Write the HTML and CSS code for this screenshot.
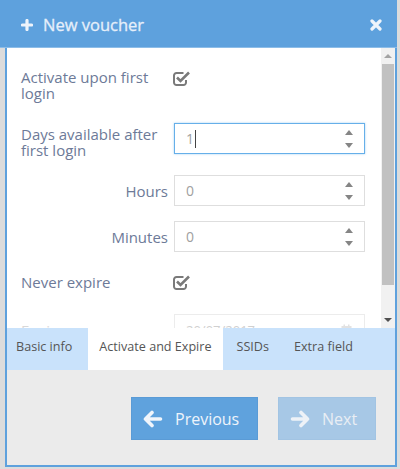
FILE: index.html
```html
<!DOCTYPE html>
<html>
<head>
<meta charset="utf-8">
<link rel="stylesheet" href="styles.css">
</head>
<body>
<div class="page">
  <div class="modal-header">
    <svg class="hdr-plus" width="12" height="12" viewBox="0 0 12 12"><path d="M6 1.5V10.5M1.5 6H10.5" stroke="#eef4fb" stroke-width="3.2" stroke-linecap="round"/></svg>
    <span class="title">New voucher</span>
    <svg class="hdr-close" width="12" height="12" viewBox="0 0 12 12"><path d="M2 2L10 10M10 2L2 10" stroke="#eef4fb" stroke-width="3.2" stroke-linecap="round"/></svg>
  </div>
  <div class="modal-frame">
    <div class="modal-body">
      <div class="form-scroll">
        <div class="row r1">
          <div class="label">Activate upon first login</div>
          <svg class="check" width="18" height="16" viewBox="0 0 18 16"><path d="M10.5 3H3.5A2.5 2.5 0 0 0 1 5.5V12.5A2.5 2.5 0 0 0 3.5 15H10.5A2.5 2.5 0 0 0 13 12.5V10" fill="none" stroke="#7a7a7a" stroke-width="2"/><path d="M4 7.5L7.5 11L16 2.5" fill="none" stroke="#7a7a7a" stroke-width="2.6"/></svg>
        </div>
        <div class="row r2">
          <div class="label two">Days available after first login</div>
          <div class="spin focus"><span class="val">1</span><span class="caret"></span><span class="arrows"><i class="up"></i><i class="down"></i></span></div>
        </div>
        <div class="row r3 mid">
          <div class="label right">Hours</div>
          <div class="spin"><span class="val">0</span><span class="arrows"><i class="up"></i><i class="down"></i></span></div>
        </div>
        <div class="row r4 mid">
          <div class="label right">Minutes</div>
          <div class="spin"><span class="val">0</span><span class="arrows"><i class="up"></i><i class="down"></i></span></div>
        </div>
        <div class="row r5">
          <div class="label">Never expire</div>
          <svg class="check c2" width="18" height="16" viewBox="0 0 18 16"><path d="M10.5 3H3.5A2.5 2.5 0 0 0 1 5.5V12.5A2.5 2.5 0 0 0 3.5 15H10.5A2.5 2.5 0 0 0 13 12.5V10" fill="none" stroke="#7a7a7a" stroke-width="2"/><path d="M4 7.5L7.5 11L16 2.5" fill="none" stroke="#7a7a7a" stroke-width="2.6"/></svg>
        </div>
        <div class="row r6 mid">
          <div class="label dis">Expire</div>
          <div class="spin dis"><span class="val">20/07/2017</span><svg class="cal" width="11" height="11" viewBox="0 0 11 11"><rect x="0.5" y="2" width="10" height="8.5" fill="#e2e2e2"/><rect x="2.5" y="0.5" width="1.5" height="3" fill="#e2e2e2"/><rect x="7" y="0.5" width="1.5" height="3" fill="#e2e2e2"/></svg></div>
        </div>
      </div>
      <div class="scrollbar">
        <div class="sb-btn"><i class="sb-up"></i></div>
        <div class="sb-thumb"></div>
        <div class="sb-rest"></div>
        <div class="sb-btn"><i class="sb-down"></i></div>
      </div>
    </div>
    <div class="tabs">
      <div class="tab t1">Basic info</div>
      <div class="tab active">Activate and Expire</div>
      <div class="tab t3">SSIDs</div>
      <div class="tab">Extra field</div>
    </div>
    <div class="modal-footer">
      <button class="btn prev"><svg width="20" height="18" viewBox="0 0 20 18"><path d="M9 2.5L2.5 9L9 15.5M3 9H17.5" fill="none" stroke="#f0f5fb" stroke-width="3.6" stroke-linecap="round" stroke-linejoin="round"/></svg><span>Previous</span></button>
      <button class="btn next"><svg width="20" height="18" viewBox="0 0 20 18"><path d="M11 2.5L17.5 9L11 15.5M17 9H2.5" fill="none" stroke="#eef2f7" stroke-width="3.6" stroke-linecap="round" stroke-linejoin="round"/></svg><span>Next</span></button>
    </div>
  </div>
</div>
</body>
</html>
```
FILE: styles.css
```css
html, body { margin: 0; padding: 0; }
body { background: #dcdcdc; font-family: "Open Sans", "Liberation Sans", sans-serif; width: 400px; height: 469px; overflow: hidden; }
.page { width: 397px; }
.modal-header {
  height: 48px; background: #5ea1dd; display: flex; align-items: center;
  padding: 2px 15px 0 21px; box-sizing: border-box;
  border-bottom: 1px solid #8dbde8;
}
.hdr-plus { flex: none; }
.title { margin-left: 10px; color: #e6effa; font-size: 16.5px; font-weight: 400; flex: 1; -webkit-text-stroke: 0.3px #e6effa; }
.hdr-close { flex: none; }
.modal-frame {
  margin-left: 5px; width: 392px; box-sizing: border-box;
  border: 2px solid #5ea1dd; border-top: none;
}
.modal-body { height: 280px; display: flex; background: #fff; }
.form-scroll { flex: 1; padding: 21px 16px 0 14px; overflow: hidden; }
.row { display: flex; align-items: flex-start; }
.row.mid { align-items: center; }
.label { width: 153px; flex: none; font-size: 15px; line-height: 16px; color: #6d7a98; }
.label.right { text-align: right; padding-right: 6px; box-sizing: border-box; }
.label.two { padding-top: 3px; }
.label.dis { color: #d8d8d8; }
.r1 { margin-bottom: 22px; }
.r1 .label { padding-right: 10px; box-sizing: border-box; }
.r2 { margin-bottom: 17px; }
.r3 { margin-bottom: 15px; }
.r4 { margin-bottom: 22px; }
.r5 { margin-bottom: 24px; }
.check { margin-top: 1px; margin-left: -1px; }
.check.c2 { margin-top: 0; }
.spin {
  width: 191px; height: 31px; box-sizing: border-box; border: 1px solid #dedede;
  display: flex; align-items: center; padding: 0 11px 0 11px;
}
.spin.focus { border-color: #66afe9; box-shadow: 0 0 2px rgba(102,175,233,0.6); }
.val { font-size: 14px; color: #a0a0a0; }
.caret { width: 1px; height: 18px; background: #444; margin-left: 1px; }
.arrows { margin-left: auto; display: flex; flex-direction: column; gap: 8px; padding-top: 1px; }
.arrows i { display: block; width: 0; height: 0; border-left: 4.5px solid transparent; border-right: 4.5px solid transparent; }
.arrows .up { border-bottom: 5px solid #858585; }
.arrows .down { border-top: 5px solid #858585; }
.spin.dis { border-color: #ececec; }
.spin.dis .val { color: #d0d0d0; font-size: 13px; }
.cal { margin-left: auto; margin-right: 1px; }
.scrollbar { width: 14px; flex: none; background: #f1f1f1; display: flex; flex-direction: column; }
.sb-btn { height: 16px; display: flex; align-items: center; justify-content: center; flex: none; }
.sb-up { width: 0; height: 0; border-left: 4px solid transparent; border-right: 4px solid transparent; border-bottom: 4px solid #a3a3a3; }
.sb-down { width: 0; height: 0; border-left: 4px solid transparent; border-right: 4px solid transparent; border-top: 4px solid #505050; }
.sb-thumb { height: 221px; margin: 0 1px 0 1px; background: #c1c1c1; flex: none; }
.sb-rest { flex: 1; }
.tabs { height: 42px; background: #c9e2fb; display: flex; padding-left: 0; }
.tab { padding: 0 10px 6px 10px; margin-right: 2px; display: flex; align-items: center; font-size: 12.6px; color: #555; }
.tab.t1 { padding-left: 9px; padding-right: 14px; }
.tab.active { background: #fff; padding: 0 11px 6px; }
.tab.t3 { padding-left: 12px; padding-right: 13px; }
.modal-footer { height: 95px; background: #ebebeb; display: flex; justify-content: flex-end; align-items: flex-start; padding: 27px 19px 0 0; box-sizing: border-box; gap: 20px; }
.btn { height: 43px; border: none; display: flex; align-items: center; justify-content: flex-start; gap: 12px; font-family: "Open Sans", "Liberation Sans", sans-serif; font-size: 16px; padding: 0 0 0 11px; box-sizing: border-box; }
.btn.prev { width: 127px; background: #5fa2dd; color: #eef4fb; border: 1px solid #5a9bd6; }
.btn.next { width: 98px; background: #a7c8e6; color: #e9eef4; border: 1px solid #a2c4e3; }
```
